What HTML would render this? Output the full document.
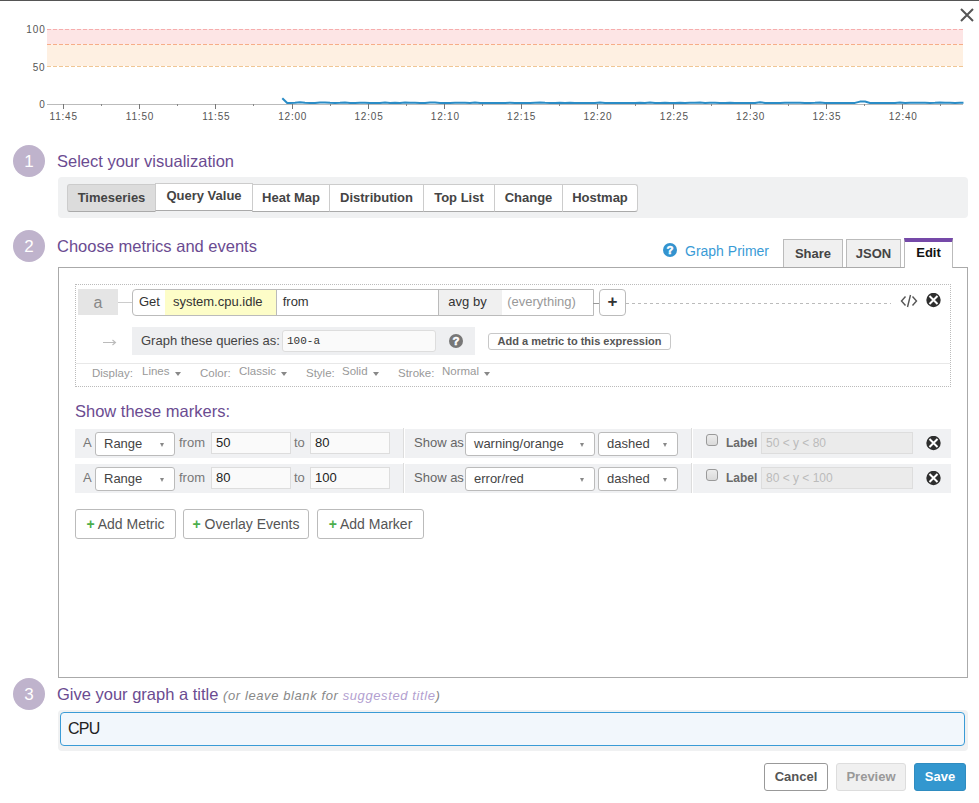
<!DOCTYPE html>
<html><head><meta charset="utf-8">
<style>
*{box-sizing:border-box;}
html,body{margin:0;padding:0;}
body{width:979px;height:803px;overflow:hidden;position:relative;background:#fff;font-family:"Liberation Sans",sans-serif;color:#333;}
.a{position:absolute;white-space:nowrap;}
.topline{position:absolute;left:0;top:0;width:979px;height:1px;background:#555;}
.step{position:absolute;left:13px;width:32px;height:32px;border-radius:50%;background:#bfb3cc;color:#fff;font-size:17px;text-align:center;line-height:34px;}
.h{position:absolute;left:57px;font-size:16.5px;color:#6b4b91;white-space:nowrap;}
.vizbar{position:absolute;left:58px;top:177px;width:910px;height:41px;background:#f0f1f2;border-radius:4px;}
.vb{position:absolute;top:184px;height:28px;border:1px solid #ccc;border-bottom-color:#aaa;background:#fff;font-weight:bold;font-size:13px;color:#444;text-align:center;line-height:25px;}
.tab{position:absolute;top:239px;height:29px;background:#f0f0f0;border:1px solid #bbb;border-bottom:none;font-weight:bold;font-size:13px;color:#444;text-align:center;line-height:27px;}
.tab.edit{top:238px;height:30px;background:#fff;border-top:4px solid #7549a8;color:#111;line-height:22px;z-index:2;}
.panel{position:absolute;left:58px;top:267px;width:910px;height:411px;border:1px solid #aaa;}
.panelgap{position:absolute;left:905px;top:267px;width:47px;height:2px;background:#fff;}
.qbox{position:absolute;left:75px;top:284px;width:876px;height:103px;border:1px dotted #bbb;}
.qinput{position:absolute;left:132px;top:289px;width:462px;height:27px;border:1px solid #bbb;border-radius:4px 0 0 4px;background:#fff;overflow:hidden;display:flex;font-size:13px;color:#333;}
.qs{display:block;height:25px;line-height:24px;white-space:nowrap;}
.plus{position:absolute;left:599px;top:289px;width:27px;height:27px;border:1px solid #bbb;border-radius:4px;background:#fff;text-align:center;font-weight:bold;font-size:17px;line-height:24px;color:#333;}
.dsp{top:367px;font-size:11.5px;color:#999;}
.dsv{top:365px;font-size:11.5px;color:#999;}
.tri{display:inline-block;margin-left:5px;vertical-align:-0.5px;border-left:3px solid transparent;border-right:3px solid transparent;border-top:4px solid #888;}
.mrow{position:absolute;left:75px;height:29px;width:876px;background:#f0f1f3;}
.sel{position:absolute;height:24px;background:#fff;border:1px solid #bbb;border-radius:3px;font-size:13px;color:#444;line-height:22px;padding-left:8px;}
.sel:after{content:"";position:absolute;right:10px;top:10px;border-left:2.7px solid transparent;border-right:2.7px solid transparent;border-top:4.5px solid #888;}
.inp{position:absolute;height:22px;background:#fafafa;border:1px solid #ddd;font-size:13px;color:#222;line-height:20px;padding-left:4px;}
.abtn{position:absolute;top:509px;height:30px;border:1px solid #bbb;border-radius:3px;background:#fff;font-size:14px;color:#555;line-height:28px;text-align:center;white-space:nowrap;}
.abtn b{color:#4cae4c;font-size:14px;}
.fbtn{position:absolute;top:763px;height:28px;border-radius:3px;font-weight:bold;font-size:13px;text-align:center;line-height:26px;}
</style></head>
<body>
<div class="topline"></div>
<svg class="a" style="left:0;top:0" width="979" height="130" viewBox="0 0 979 130">
  <rect x="47" y="29" width="916" height="15" fill="#fde5e5"/>
  <rect x="47" y="44" width="916" height="22" fill="#fef0e2"/>
  <line x1="47" y1="29.5" x2="963" y2="29.5" stroke="#f6adad" stroke-width="1" stroke-dasharray="4,2"/>
  <line x1="47" y1="44.5" x2="963" y2="44.5" stroke="#f7ad88" stroke-width="1" stroke-dasharray="4,2"/>
  <line x1="47" y1="66.5" x2="963" y2="66.5" stroke="#f0c694" stroke-width="1" stroke-dasharray="4,2"/>
  <line x1="47" y1="104.5" x2="963" y2="104.5" stroke="#bbb" stroke-width="1"/>
  <g stroke-width="1"><line x1="63.5" y1="104" x2="63.5" y2="109" stroke="#777"/>
<line x1="101.5" y1="104" x2="101.5" y2="106" stroke="#888"/>
<line x1="139.5" y1="104" x2="139.5" y2="109" stroke="#777"/>
<line x1="177.5" y1="104" x2="177.5" y2="106" stroke="#888"/>
<line x1="215.5" y1="104" x2="215.5" y2="109" stroke="#777"/>
<line x1="253.5" y1="104" x2="253.5" y2="106" stroke="#888"/>
<line x1="292.5" y1="104" x2="292.5" y2="109" stroke="#777"/>
<line x1="330.5" y1="104" x2="330.5" y2="106" stroke="#888"/>
<line x1="368.5" y1="104" x2="368.5" y2="109" stroke="#777"/>
<line x1="406.5" y1="104" x2="406.5" y2="106" stroke="#888"/>
<line x1="444.5" y1="104" x2="444.5" y2="109" stroke="#777"/>
<line x1="482.5" y1="104" x2="482.5" y2="106" stroke="#888"/>
<line x1="521.5" y1="104" x2="521.5" y2="109" stroke="#777"/>
<line x1="559.5" y1="104" x2="559.5" y2="106" stroke="#888"/>
<line x1="597.5" y1="104" x2="597.5" y2="109" stroke="#777"/>
<line x1="635.5" y1="104" x2="635.5" y2="106" stroke="#888"/>
<line x1="673.5" y1="104" x2="673.5" y2="109" stroke="#777"/>
<line x1="711.5" y1="104" x2="711.5" y2="106" stroke="#888"/>
<line x1="750.5" y1="104" x2="750.5" y2="109" stroke="#777"/>
<line x1="788.5" y1="104" x2="788.5" y2="106" stroke="#888"/>
<line x1="826.5" y1="104" x2="826.5" y2="109" stroke="#777"/>
<line x1="864.5" y1="104" x2="864.5" y2="106" stroke="#888"/>
<line x1="902.5" y1="104" x2="902.5" y2="109" stroke="#777"/>
<line x1="940.5" y1="104" x2="940.5" y2="106" stroke="#888"/></g>
  <g font-family="Liberation Sans" font-size="10" fill="#555" letter-spacing="0.9">
    <text x="45.6" y="32.6" text-anchor="end">100</text>
    <text x="45.6" y="70.6" text-anchor="end">50</text>
    <text x="45.6" y="107.6" text-anchor="end">0</text>
  </g>
  <g font-family="Liberation Sans" font-size="10" fill="#555" text-anchor="middle" letter-spacing="0.8"><text x="63.7" y="119.5">11:45</text>
<text x="140.0" y="119.5">11:50</text>
<text x="216.3" y="119.5">11:55</text>
<text x="292.7" y="119.5">12:00</text>
<text x="369.0" y="119.5">12:05</text>
<text x="445.3" y="119.5">12:10</text>
<text x="521.6" y="119.5">12:15</text>
<text x="597.9" y="119.5">12:20</text>
<text x="674.3" y="119.5">12:25</text>
<text x="750.6" y="119.5">12:30</text>
<text x="826.9" y="119.5">12:35</text>
<text x="903.2" y="119.5">12:40</text></g>
  <path id="dl" fill="none" stroke="#2a8cc6" stroke-width="2" stroke-linejoin="round" d="M282.3,98.2 L287.2,103.0 L290.0,102.9 L295.0,102.8 L300.0,102.3 L305.0,102.8 L310.0,102.9 L315.0,102.9 L320.0,102.4 L325.0,102.5 L330.0,102.8 L335.0,102.9 L340.0,102.8 L345.0,102.4 L350.0,102.9 L355.0,103.0 L360.0,102.8 L365.0,102.8 L370.0,102.9 L375.0,103.0 L380.0,102.9 L385.0,102.4 L390.0,103.0 L395.0,102.8 L400.0,103.0 L405.0,102.5 L410.0,102.8 L415.0,102.8 L420.0,102.9 L425.0,103.0 L430.0,102.4 L435.0,102.5 L440.0,102.9 L445.0,102.9 L450.0,102.9 L455.0,102.8 L460.0,102.8 L465.0,102.8 L470.0,102.9 L475.0,102.5 L480.0,102.9 L485.0,102.9 L490.0,102.9 L495.0,102.9 L500.0,103.0 L505.0,102.9 L510.0,102.8 L515.0,102.9 L520.0,102.9 L525.0,103.0 L530.0,103.0 L535.0,102.8 L540.0,102.5 L545.0,102.8 L550.0,102.9 L555.0,103.0 L560.0,102.8 L565.0,102.9 L570.0,102.8 L575.0,102.9 L580.0,103.0 L585.0,102.9 L590.0,103.0 L595.0,102.9 L600.0,102.5 L605.0,102.9 L610.0,102.9 L615.0,102.9 L620.0,103.0 L625.0,103.0 L630.0,102.9 L635.0,102.9 L640.0,102.8 L645.0,102.9 L650.0,102.4 L655.0,103.0 L660.0,103.0 L665.0,102.8 L670.0,102.9 L675.0,102.9 L680.0,102.8 L685.0,102.9 L690.0,102.8 L695.0,102.8 L700.0,102.4 L705.0,103.0 L710.0,102.8 L715.0,102.8 L720.0,102.9 L725.0,103.0 L730.0,102.8 L735.0,102.9 L740.0,102.9 L745.0,103.0 L750.0,103.0 L755.0,103.0 L760.0,102.3 L765.0,102.9 L770.0,102.9 L775.0,103.0 L780.0,103.0 L785.0,102.8 L790.0,102.8 L795.0,102.8 L800.0,102.8 L805.0,102.9 L810.0,102.9 L815.0,102.8 L820.0,102.4 L825.0,102.9 L830.0,102.9 L835.0,102.9 L840.0,103.0 L845.0,102.9 L850.0,102.9 L855.0,102.9 L860.0,101.6 L865.0,101.5 L870.0,103.0 L875.0,103.0 L880.0,103.0 L885.0,103.0 L890.0,102.9 L895.0,102.9 L900.0,102.4 L905.0,102.9 L910.0,102.8 L915.0,102.8 L920.0,102.8 L925.0,102.8 L930.0,102.9 L935.0,102.8 L940.0,102.4 L945.0,102.8 L950.0,102.8 L955.0,102.9 L960.0,102.8 L963.5,102.7"/>
</svg>
<svg class="a" style="left:958px;top:6px" width="18" height="18"><path d="M3,3 L15,15 M15,3 L3,15" stroke="#555" stroke-width="2"/></svg>

<div class="step" style="top:145px">1</div>
<div class="h" style="top:152px">Select your visualization</div>
<div class="vizbar"></div>
<div class="vb" style="left:67px;width:89px;background:#dcdcdc;border-radius:3px 0 0 3px;">Timeseries</div>
<div class="vb" style="left:155px;width:98px;top:183px;line-height:24px;">Query Value</div>
<div class="vb" style="left:252px;width:78px;">Heat Map</div>
<div class="vb" style="left:329px;width:95px;">Distribution</div>
<div class="vb" style="left:423px;width:72px;">Top List</div>
<div class="vb" style="left:494px;width:69px;">Change</div>
<div class="vb" style="left:562px;width:76px;border-radius:0 3px 3px 0;">Hostmap</div>

<div class="step" style="top:230px">2</div>
<div class="h" style="top:237px">Choose metrics and events</div>

<!-- graph primer + tabs -->
<svg class="a" style="left:663px;top:243px" width="14" height="14" viewBox="0 0 14 14"><circle cx="7" cy="7" r="7" fill="#3393cf"/><text x="7" y="11.4" font-family="Liberation Sans" font-weight="bold" font-size="11.5" fill="#fff" stroke="#fff" stroke-width="0.5" text-anchor="middle">?</text></svg>
<div class="a" style="left:685px;top:243px;font-size:14px;color:#3a9bd6;">Graph Primer</div>
<div class="tab" style="left:783px;width:60px;">Share</div>
<div class="tab" style="left:846px;width:55px;">JSON</div>
<div class="tab edit" style="left:904px;width:49px;">Edit</div>

<!-- panel -->
<div class="panel"></div>
<div class="panelgap"></div>

<!-- query box -->
<div class="qbox"></div>
<div class="a" style="left:78px;top:289px;width:40px;height:26px;background:#e5e5e5;color:#888;font-size:16px;text-align:center;line-height:27px;">a</div>
<div class="a" style="left:118px;top:302px;width:14px;height:1px;background:#ccc;"></div>
<div class="qinput">
  <span class="qs" style="width:32px;padding-left:6px;">Get</span><span class="qs" style="width:111px;background:#fdfdc8;padding-left:8px;">system.cpu.idle</span><span class="qs" style="width:163px;border-left:1px solid #bbb;padding-left:6px;">from</span><span class="qs" style="width:64px;border-left:1px solid #bbb;background:#f0f0f0;padding-left:9px;">avg by</span><span class="qs" style="width:91px;color:#999;padding-left:5px;">(everything)</span>
</div>
<div class="a" style="left:593px;top:303px;width:6px;height:1px;background:#999;"></div>
<div class="plus">+</div>
<div class="a" style="left:626px;top:303px;width:265px;height:1px;background-image:linear-gradient(to right,#bbb 0,#bbb 3px,transparent 3px);background-size:6px 1px;"></div>
<svg class="a" style="left:899px;top:293px" width="20" height="16" viewBox="0 0 20 16"><path d="M6.5,3.5 L2.5,8 L6.5,12.5 M13.5,3.5 L17.5,8 L13.5,12.5 M11.5,2 L8.5,14" fill="none" stroke="#555" stroke-width="1.4"/></svg>
<svg class="a" style="left:926px;top:293px" width="15" height="15" viewBox="0 0 15 15"><circle cx="7.5" cy="7" r="7.2" fill="#2e2e2e"/><path d="M3.5,3 L11.5,11 M11.5,3 L3.5,11" stroke="#fff" stroke-width="2"/></svg>

<svg class="a" style="left:102px;top:337px" width="16" height="11" viewBox="0 0 16 11"><path d="M1,5.5 L13.5,5.5 M10.5,3 L13.5,5.5 L10.5,8" fill="none" stroke="#bbb" stroke-width="1.1"/></svg>
<div class="a" style="left:132px;top:327px;width:343px;height:28px;background:#eeeff1;"></div>
<div class="a" style="left:141px;top:333px;font-size:13px;color:#444;">Graph these queries as:</div>
<div class="a" style="left:282px;top:330px;width:154px;height:22px;background:#fafafa;border:1px solid #ddd;border-radius:3px;font-family:'Liberation Mono',monospace;font-size:11px;color:#333;line-height:20px;padding-left:4px;">100-a</div>
<svg class="a" style="left:449px;top:334px" width="14" height="14" viewBox="0 0 14 14"><circle cx="7" cy="7" r="7" fill="#777"/><text x="7" y="11.4" font-family="Liberation Sans" font-weight="bold" font-size="11.5" fill="#fff" stroke="#fff" stroke-width="0.5" text-anchor="middle">?</text></svg>
<div class="a" style="left:488px;top:333px;width:183px;height:17px;border:1px solid #c8c8c8;border-radius:3px;background:#fff;font-weight:bold;font-size:11px;color:#555;text-align:center;line-height:15px;">Add a metric to this expression</div>

<div class="a" style="left:76px;top:363px;width:874px;height:1px;background:#e8e8e8;"></div>
<div class="a dsp" style="left:92px;">Display:</div>
<div class="a dsv" style="left:142px;">Lines<i class="tri"></i></div>
<div class="a dsp" style="left:200px;">Color:</div>
<div class="a dsv" style="left:239px;">Classic<i class="tri"></i></div>
<div class="a dsp" style="left:306px;">Style:</div>
<div class="a dsv" style="left:342px;">Solid<i class="tri"></i></div>
<div class="a dsp" style="left:398px;">Stroke:</div>
<div class="a dsv" style="left:442px;">Normal<i class="tri"></i></div>

<!-- markers -->
<div class="a" style="left:75px;top:402px;font-size:16.5px;color:#6b4b91;">Show these markers:</div>
<div class="mrow" style="top:429px"></div>
<div class="a" style="left:83px;top:435px;font-size:13px;color:#777;">A</div>
<div class="sel" style="left:95px;top:432px;width:80px;">Range</div>
<div class="a" style="left:179px;top:435px;font-size:13px;color:#777;">from</div>
<div class="inp" style="left:211px;top:432px;width:80px;">50</div>
<div class="a" style="left:294px;top:435px;font-size:13px;color:#777;">to</div>
<div class="inp" style="left:310px;top:432px;width:80px;">80</div>
<div class="a" style="left:403px;top:428px;width:1px;height:30px;background:#ddd;border-right:0;"></div><div class="a" style="left:404px;top:428px;width:1px;height:30px;background:#fff;"></div>
<div class="a" style="left:414px;top:435px;font-size:13px;color:#666;">Show as</div>
<div class="sel" style="left:465px;top:432px;width:130px;">warning/orange</div>
<div class="sel" style="left:598px;top:432px;width:80px;">dashed</div>
<div class="a" style="left:691px;top:428px;width:1px;height:30px;background:#ddd;"></div><div class="a" style="left:692px;top:428px;width:1px;height:30px;background:#fff;"></div>
<div class="a" style="left:706px;top:434px;width:12px;height:12px;border:1px solid #9a9a9a;border-radius:3px;background:linear-gradient(#ececec,#dadada);"></div>
<div class="a" style="left:726px;top:436px;font-size:12px;font-weight:bold;color:#6a6a6a;">Label</div>
<div class="inp" style="left:761px;top:432px;width:152px;background:#ebebeb;color:#bbb;font-size:12px;">50 &lt; y &lt; 80</div>
<svg class="a" style="left:926px;top:436px" width="15" height="15" viewBox="0 0 15 15"><circle cx="7.5" cy="7" r="7.2" fill="#2e2e2e"/><path d="M3.5,3 L11.5,11 M11.5,3 L3.5,11" stroke="#fff" stroke-width="2"/></svg>
<div class="mrow" style="top:464px"></div>
<div class="a" style="left:83px;top:470px;font-size:13px;color:#777;">A</div>
<div class="sel" style="left:95px;top:467px;width:80px;">Range</div>
<div class="a" style="left:179px;top:470px;font-size:13px;color:#777;">from</div>
<div class="inp" style="left:211px;top:467px;width:80px;">80</div>
<div class="a" style="left:294px;top:470px;font-size:13px;color:#777;">to</div>
<div class="inp" style="left:310px;top:467px;width:80px;">100</div>
<div class="a" style="left:403px;top:463px;width:1px;height:30px;background:#ddd;border-right:0;"></div><div class="a" style="left:404px;top:463px;width:1px;height:30px;background:#fff;"></div>
<div class="a" style="left:414px;top:470px;font-size:13px;color:#666;">Show as</div>
<div class="sel" style="left:465px;top:467px;width:130px;">error/red</div>
<div class="sel" style="left:598px;top:467px;width:80px;">dashed</div>
<div class="a" style="left:691px;top:463px;width:1px;height:30px;background:#ddd;"></div><div class="a" style="left:692px;top:463px;width:1px;height:30px;background:#fff;"></div>
<div class="a" style="left:706px;top:469px;width:12px;height:12px;border:1px solid #9a9a9a;border-radius:3px;background:linear-gradient(#ececec,#dadada);"></div>
<div class="a" style="left:726px;top:471px;font-size:12px;font-weight:bold;color:#6a6a6a;">Label</div>
<div class="inp" style="left:761px;top:467px;width:152px;background:#ebebeb;color:#bbb;font-size:12px;">80 &lt; y &lt; 100</div>
<svg class="a" style="left:926px;top:471px" width="15" height="15" viewBox="0 0 15 15"><circle cx="7.5" cy="7" r="7.2" fill="#2e2e2e"/><path d="M3.5,3 L11.5,11 M11.5,3 L3.5,11" stroke="#fff" stroke-width="2"/></svg>


<div class="abtn" style="left:75px;width:101px;"><b>+</b> Add Metric</div>
<div class="abtn" style="left:183px;width:126px;"><b>+</b> Overlay Events</div>
<div class="abtn" style="left:317px;width:107px;"><b>+</b> Add Marker</div>

<div class="step" style="top:678px">3</div>
<div class="h" style="top:685px">Give your graph a title <i style="font-size:13px;color:#888;letter-spacing:0.6px;">(or leave blank for <span style="color:#b39fd0">suggested title</span>)</i></div>
<div class="a" style="left:58px;top:710px;width:910px;height:41px;background:#f0f1f2;border-radius:4px;"></div>
<div class="a" style="left:60px;top:712px;width:905px;height:34px;background:#f2f7fc;border:1px solid #3a9bd6;border-radius:4px;font-size:16px;color:#222;line-height:32px;padding-left:7px;letter-spacing:-0.8px;">CPU</div>

<div class="fbtn" style="left:764px;width:64px;background:#fff;border:1px solid #999;color:#555;">Cancel</div>
<div class="fbtn" style="left:836px;width:70px;background:#f0f0f0;border:1px solid #ddd;color:#999;">Preview</div>
<div class="fbtn" style="left:914px;width:52px;background:#3397cf;border:1px solid #2f8cc0;color:#fff;">Save</div>

</body></html>
